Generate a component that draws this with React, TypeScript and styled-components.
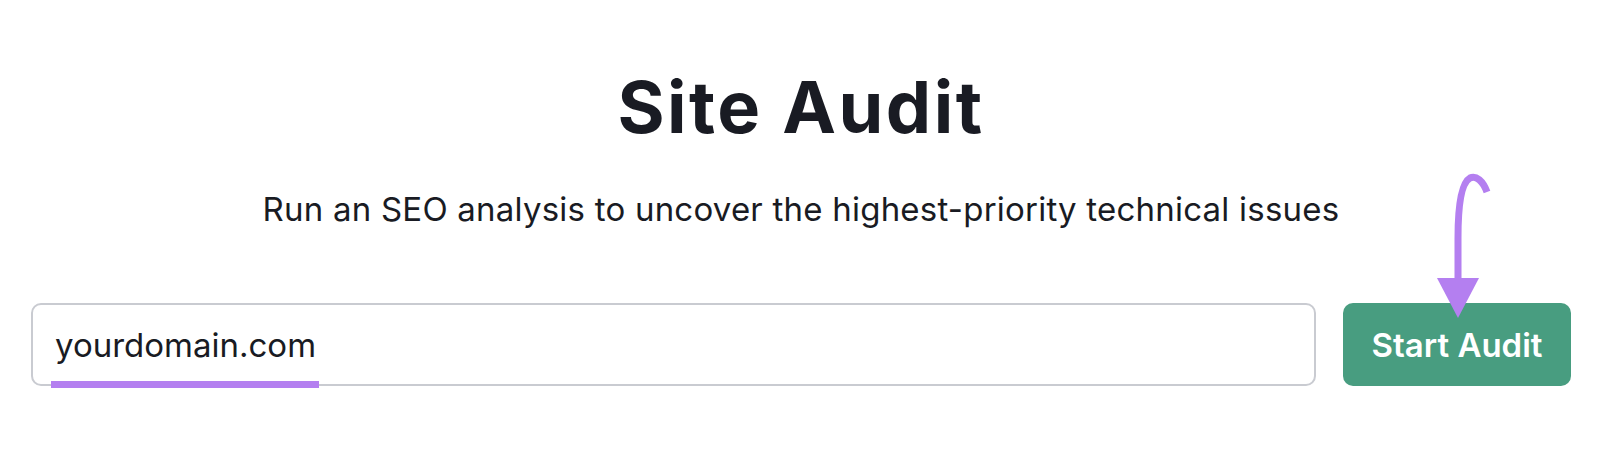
import React from "react";
import styled, { createGlobalStyle } from "styled-components";

const GlobalStyle = createGlobalStyle`
    html, body {
        margin: 0;
        padding: 0;
        background: #ffffff;
    }
    body {
        font-family: Inter, "Noto Sans", sans-serif;
        color: #191b23;
    }
`;

const Page = styled.main`
    width: 1600px;
    height: 473px;
    box-sizing: border-box;
    padding: 63px 29px 0 31px;
    display: flex;
    flex-direction: column;
    align-items: center;
`;

const Title = styled.h1`
    margin: 0;
    font-size: 72px;
    line-height: 88px;
    font-weight: 700;
    letter-spacing: 2.5px;
    color: #191b23;
`;

const Subtitle = styled.p`
    margin: 38px 0 0;
    font-size: 33px;
    line-height: 40px;
    font-weight: 400;
    letter-spacing: 0.22px;
    color: #191b23;
`;

const FormRow = styled.div`
    width: 100%;
    margin-top: 74px;
    display: flex;
    gap: 27px;
`;

const InputBox = styled.label`
    position: relative;
    flex: 1;
    height: 83px;
    box-sizing: border-box;
    border: 2px solid #c9cbd1;
    border-radius: 10px;
    display: flex;
    align-items: center;
    padding: 0 22px;
`;

const InputText = styled.span`
    font-size: 33px;
    font-weight: 400;
    color: #191b23;
`;

const Highlight = styled.span`
    position: absolute;
    left: 18px;
    bottom: -4px;
    width: 268px;
    height: 7px;
    background: #b47ff0;
`;

const ButtonWrap = styled.div`
    position: relative;
    width: 228px;
    height: 83px;
`;

const StartButton = styled.button`
    width: 100%;
    height: 100%;
    border: 0;
    border-radius: 10px;
    background: #489d80;
    color: #ffffff;
    font-family: Inter, "Noto Sans", sans-serif;
    font-size: 33px;
    font-weight: 600;
    cursor: pointer;
`;

const Pointer = styled.svg`
    position: absolute;
    left: 85px;
    top: -135px;
    width: 70px;
    height: 155px;
    overflow: visible;
`;

const App: React.FunctionComponent = () => {
    return (
        <>
            <GlobalStyle />
            <Page>
                <Title>Site Audit</Title>
                <Subtitle>
                    Run an SEO analysis to uncover the highest-priority
                    technical issues
                </Subtitle>
                <FormRow>
                    <InputBox>
                        <InputText>yourdomain.com</InputText>
                        <Highlight />
                    </InputBox>
                    <ButtonWrap>
                        <StartButton>Start Audit</StartButton>
                        <Pointer viewBox="0 0 70 155">
                            <path
                                d="M59 24 C55 13, 48 7, 42 10 C33 15, 30 40, 30 70 L30 115"
                                fill="none"
                                stroke="#b47ff0"
                                strokeWidth="7"
                                strokeLinecap="butt"
                            />
                            <path d="M9 110 L51 110 L30 150 Z" fill="#b47ff0" />
                        </Pointer>
                    </ButtonWrap>
                </FormRow>
            </Page>
        </>
    );
};

export default App;
